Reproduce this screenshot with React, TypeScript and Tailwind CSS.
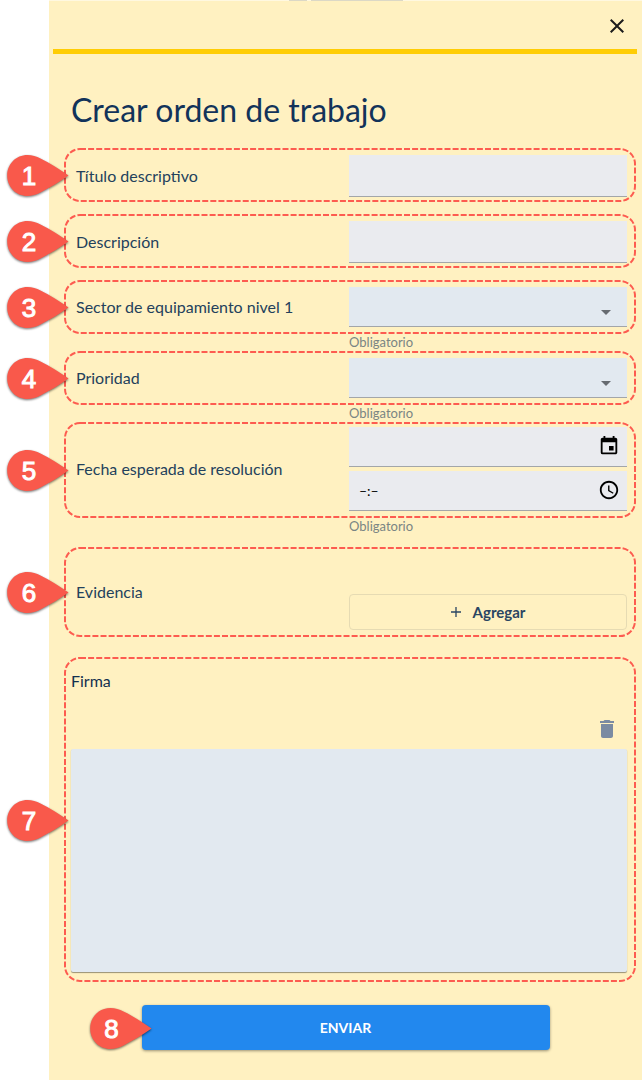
import type { ReactNode } from 'react';
import { MdAccessTime, MdArrowDropDown, MdClose, MdDelete, MdEvent } from 'react-icons/md';

function Pin({ n, place }: { n: number; place: string }) {
  return (
    <span className={`pointer-events-none absolute top-1/2 z-10 flex h-11 w-16 -translate-y-1/2 items-center ${place}`}>
      <svg className="absolute inset-0 h-11 w-16 drop-shadow-[0_1px_1px_rgba(0,0,0,0.55)]" viewBox="0 0 64 44" aria-hidden="true">
        <path
          d="M21.500 2C10 2 1.200 11 1.200 22.500S10 43 21.500 43C26 43 30.500 41.500 34.500 39.500C44 34.500 54 28.500 62.500 22.500C54 16.500 44 10 34.500 5.500C30.500 3.500 26 2 21.500 2Z"
          fill="#f9594b"
        />
      </svg>
      <span className="relative w-[46px] pt-0.5 text-center font-['Liberation_Sans',sans-serif] text-[26px] leading-8 text-white [-webkit-text-stroke:1px_white]">{n}</span>
    </span>
  );
}

function Callout({ n, className, children }: { n: number; className: string; children: ReactNode }) {
  return (
    <div className={`relative pr-[9px] pl-[7px] ${className}`}>
      <svg className="pointer-events-none absolute inset-0 h-full w-full overflow-visible" aria-hidden="true">
        <rect
          x="1"
          y="1"
          rx="15"
          className="h-[calc(100%-2px)] w-[calc(100%-2px)]"
          fill="none"
          stroke="#fd5c50"
          strokeWidth="2"
          strokeDasharray="6 2.1"
        />
      </svg>
      {children}
      <Pin n={n} place="-left-[58px]" />
    </div>
  );
}

const label = 'pl-[5px] text-base leading-6 text-[#23415c]';
const box = 'block w-full appearance-none rounded-none border-b border-[#a3a6a9] px-[10px] text-sm outline-none';

function Hint() {
  return (
    <div className="grid grid-cols-2 pr-[9px] pl-[7px]">
      <p className="col-start-2 text-[13px] leading-[17px] text-[#7a8584]">Obligatorio</p>
    </div>
  );
}

function TextRow({ n, id, text }: { n: number; id: string; text: string }) {
  return (
    <Callout n={n} className="mb-3 grid grid-cols-2 items-center pt-[7px] pb-[5px]">
      <label htmlFor={id} className={label}>{text}</label>
      <input id={id} type="text" className={`${box} h-[42px] bg-[#eaebef]`} />
    </Callout>
  );
}

function SelectRow({ n, id, text }: { n: number; id: string; text: string }) {
  return (
    <>
      <Callout n={n} className="grid grid-cols-2 items-center py-[7px]">
        <label htmlFor={id} className={label}>{text}</label>
        <div className="relative">
          <select id={id} required defaultValue="" className={`${box} h-10 bg-[#e2e9f0]`}>
            <option value="" />
          </select>
          <MdArrowDropDown size={24} className="pointer-events-none absolute right-[9px] bottom-[3px] text-[#666b70]" />
        </div>
      </Callout>
      <Hint />
    </>
  );
}

export default function App() {
  return (
    <div className="flex min-h-screen bg-white pl-[49px] font-[Lato,sans-serif]">
      <main className="min-w-0 flex-1 bg-[#fff1c1]">
        <div className="flex h-px justify-center gap-1 bg-[#fff8e0]">
          <span className="w-[18px] bg-[#dcd8c6]" />
          <span className="w-[92px] bg-[#dcd8c6]" />
        </div>
        <header className="mr-[5px] ml-1 flex h-[53px] items-center justify-end border-b-5 border-[#ffcd05] pt-0.5 pr-2">
          <button type="button" aria-label="Cerrar" className="text-[#1c1c1c]">
            <MdClose size={24} />
          </button>
        </header>
        <form className="pb-[30px]" onSubmit={(e) => e.preventDefault()}>
          <div className="mr-[6px] ml-[15px]">
            <h1 className="pt-9 pb-[18px] pl-[7px] text-[32px] leading-10 text-[#12335a]">Crear orden de trabajo</h1>

            <TextRow n={1} id="titulo" text="Título descriptivo" />
            <TextRow n={2} id="descripcion" text="Descripción" />
            <SelectRow n={3} id="sector" text="Sector de equipamiento nivel 1" />
            <SelectRow n={4} id="prioridad" text="Prioridad" />

            <Callout n={5} className="grid grid-cols-2 items-center pt-[5px] pb-[7px]">
              <label htmlFor="fecha" className={label}>Fecha esperada de resolución</label>
              <div className="flex flex-col gap-1">
                <div className="relative">
                  <input id="fecha" type="text" className={`${box} h-10 bg-[#eaebef]`} />
                  <button type="button" aria-label="Elegir fecha" className="absolute top-2 right-[7px] text-black">
                    <MdEvent size={22} />
                  </button>
                </div>
                <div className="relative">
                  <input type="text" aria-label="Hora" defaultValue="–:–" className={`${box} h-10 bg-[#eaebef] text-black`} />
                  <button type="button" aria-label="Elegir hora" className="absolute top-2 right-[7px] text-black">
                    <MdAccessTime size={22} />
                  </button>
                </div>
              </div>
            </Callout>
            <Hint />

            <Callout n={6} className="mt-3 grid grid-cols-2 items-center">
              <span className={label}>Evidencia</span>
              <div className="pt-[47px] pb-[7px]">
                <button
                  type="button"
                  className="flex h-9 w-full items-center justify-center gap-3 rounded border border-[#e6dbb3] text-[15px] font-bold text-[#2a4563]"
                >
                  <svg width="10" height="10" viewBox="0 0 10 10" stroke="currentColor" strokeWidth="1.3" aria-hidden="true">
                    <path d="M5 0v10M0 5h10" />
                  </svg>
                  Agregar
                </button>
              </div>
            </Callout>

            <Callout n={7} className="mt-5 pt-3 pb-[10px]">
              <p className="text-base leading-6 text-[#12304f]">Firma</p>
              <div className="mt-6 mb-2 flex justify-end pr-2">
                <button type="button" aria-label="Borrar firma" className="text-[#7b8ba2]">
                  <MdDelete size={24} />
                </button>
              </div>
              <canvas
                aria-label="Área de firma"
                className="block h-[223px] w-full rounded-xs bg-[#e2e9f0] shadow-[0_1px_1px_rgba(0,0,0,0.4)]"
              />
            </Callout>
          </div>

          <div className="relative mx-auto mt-[23px] w-full max-w-[408px]">
            <button
              type="submit"
              className="block h-[45px] w-full rounded bg-[#2288ee] text-sm font-bold text-white shadow-[0_1px_3px_rgba(0,0,0,0.4)]"
            >
              ENVIAR
            </button>
            <Pin n={8} place="-left-[53px]" />
          </div>
        </form>
      </main>
    </div>
  );
}
